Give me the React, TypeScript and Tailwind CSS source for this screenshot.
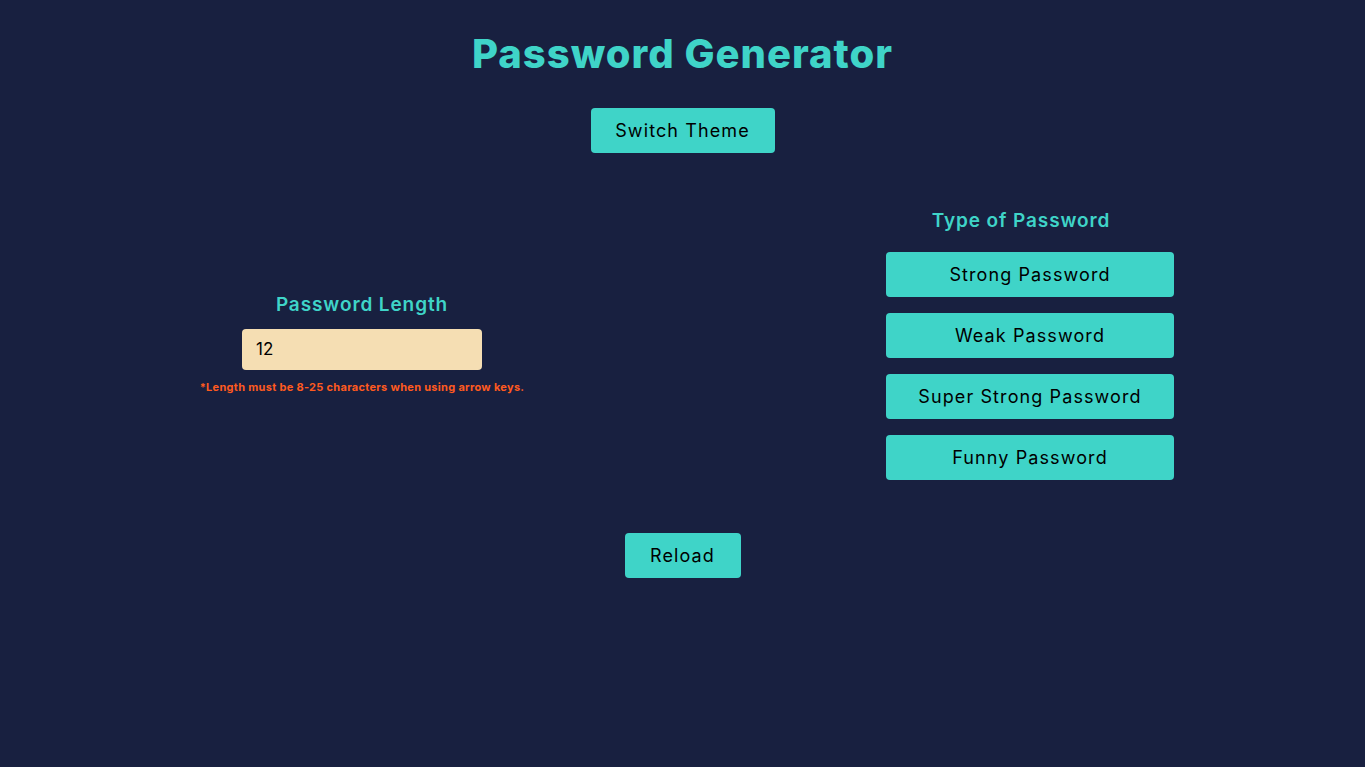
const types = ["Strong Password", "Weak Password", "Super Strong Password", "Funny Password"];

const App = () => {
  return (
    <div className="min-h-[767px] w-full bg-[#182040] font-['Inter',sans-serif] text-black">
      {/* Header */}
      <div className="flex flex-col items-center pt-[30px]">
        <h1 className="h-[48px] text-[40px] leading-[48px] font-extrabold tracking-[1px] text-[#3fd4c8]">Password Generator</h1>
        <button className="mt-[30px] h-[45px] w-[184px] rounded-[4px] bg-[#3fd4c8] text-[18px] tracking-[1.1px]">Switch Theme</button>
      </div>

      {/* Main row */}
      <div className="mt-[54px] flex items-center justify-between px-[191px]">
        {/* Length */}
        <div className="flex w-[342px] flex-col items-center pb-[2px]">
          <h3 className="h-[28px] text-[19px] leading-[28px] font-semibold tracking-[0.9px] text-[#3fd4c8]">Password Length</h3>
          <input
            type="text"
            defaultValue="12"
            className="mt-[10px] h-[41px] w-[240px] rounded-[4px] bg-[#f5deb3] pl-[14px] text-[17px] outline-none"
          />
          <p className="mt-[9px] text-[11px] leading-[16px] font-bold tracking-[0.3px] text-[#ff5a1f]">
            *Length must be 8-25 characters when using arrow keys.
          </p>
        </div>

        {/* Types */}
        <div className="flex w-[288px] flex-col items-center">
          <h3 className="mr-[18px] h-[28px] text-[19px] leading-[28px] font-semibold tracking-[0.9px] text-[#3fd4c8]">Type of Password</h3>
          <div className="mt-[17px] flex w-full flex-col gap-4">
            {types.map((t) => (
              <button key={t} className="h-[45px] w-full rounded-[4px] bg-[#3fd4c8] text-[18px] tracking-[1.1px]">
                {t}
              </button>
            ))}
          </div>
        </div>
      </div>

      {/* Reload */}
      <div className="mt-[53px] flex justify-center">
        <button className="h-[45px] w-[116px] rounded-[4px] bg-[#3fd4c8] text-[18px] tracking-[1.1px]">Reload</button>
      </div>
    </div>
  );
};

export default App;
